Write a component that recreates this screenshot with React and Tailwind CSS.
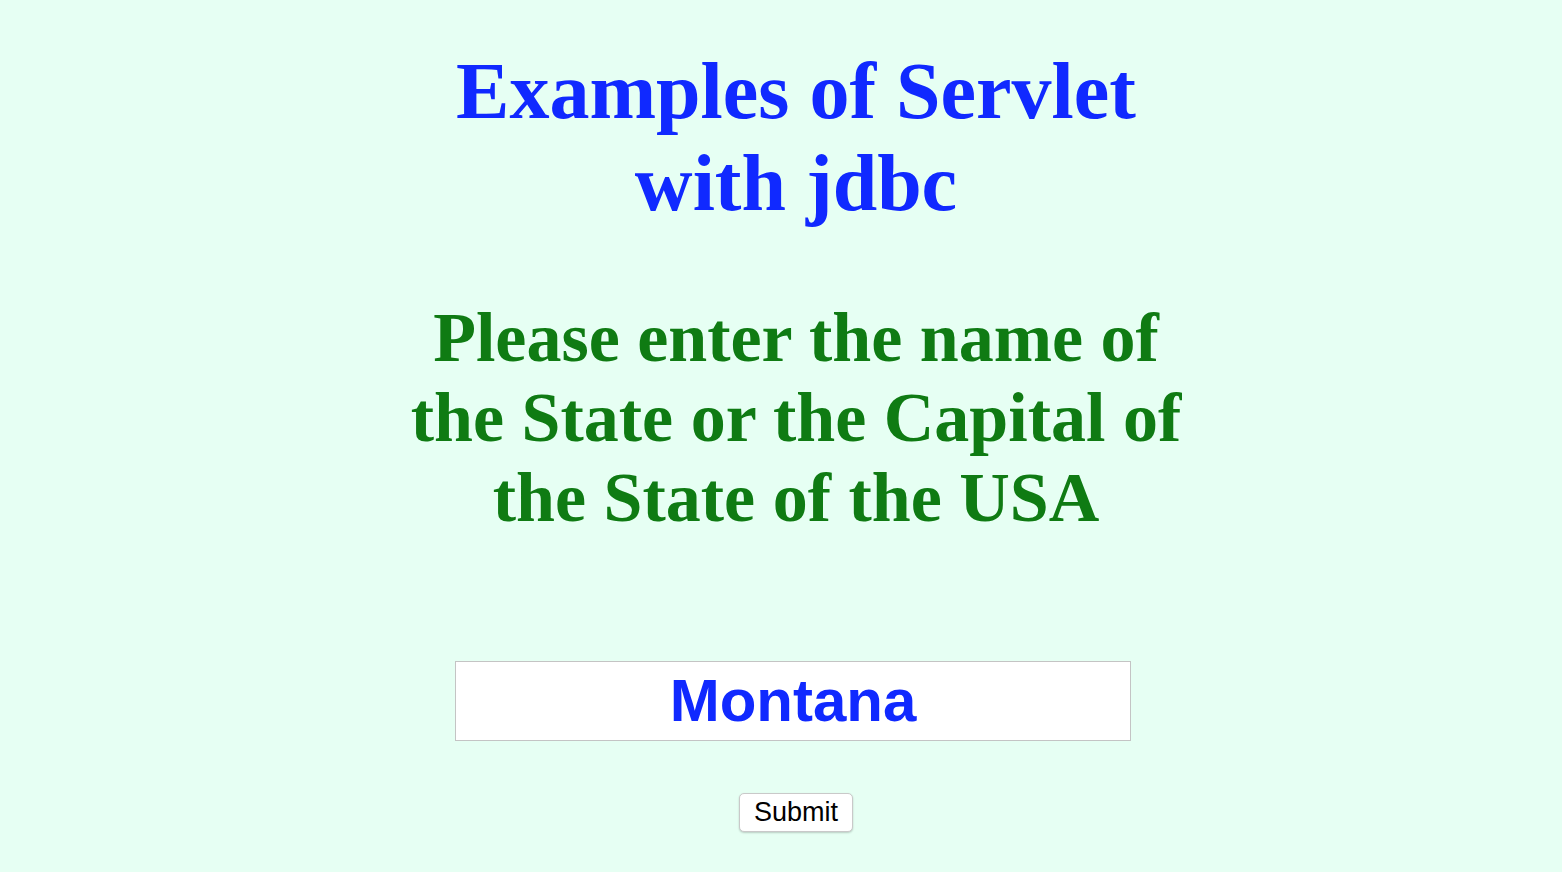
export default function App() {
  return (
    <div className="min-h-screen w-full bg-[#e6fff3] flex justify-center pl-[30px]">
      <div className="w-[800px] flex flex-col items-center pt-[45px]">
        <h1 className="text-center font-bold text-[80px] leading-[92px] text-[#1029ff] font-['Liberation_Serif','Times_New_Roman',serif]">
          Examples of Servlet with jdbc
        </h1>

        <h2 className="mt-[69px] text-center font-bold text-[70px] leading-[80px] text-[#0f7b13] font-['Liberation_Serif','Times_New_Roman',serif]">
          Please enter the name of the State or the Capital of the State of the USA
        </h2>

        <form className="mt-[123px] flex flex-col items-center" onSubmit={(e) => e.preventDefault()}>
          <input
            type="text"
            defaultValue="Montana"
            className="w-[676px] h-[80px] -ml-[6px] bg-white border border-[#c4c4c4] text-center font-bold text-[60px] text-[#1029ff] font-['Liberation_Sans',Arial,sans-serif] outline-none"
          />
          <button
            type="submit"
            className="mt-[52px] w-[114px] h-[39px] bg-white border border-[#c9c9c9] rounded-[5px] shadow-[0_1px_2px_rgba(0,0,0,0.2)] text-[27px] leading-none text-black font-['Liberation_Sans',Arial,sans-serif]"
          >
            Submit
          </button>
        </form>
      </div>
    </div>
  );
}
